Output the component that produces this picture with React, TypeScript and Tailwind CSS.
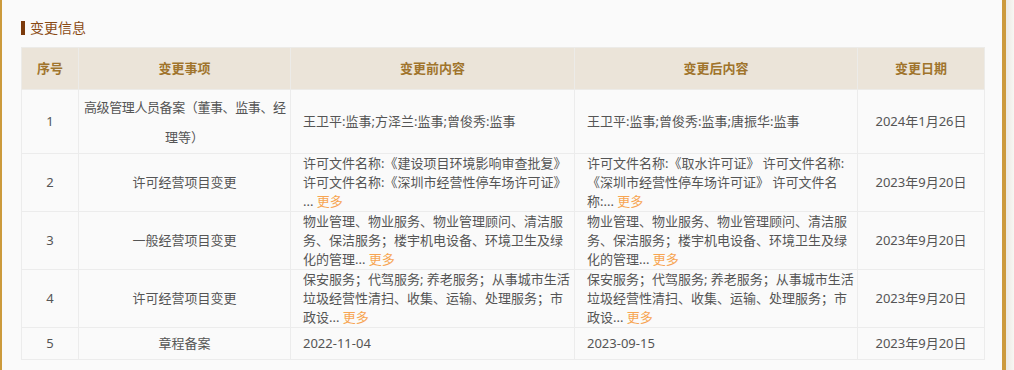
import React from "react";

const More = () => <span className="text-[#f7a552]"> 更多</span>;

type Row = {
  no: string;
  item: React.ReactNode;
  before: React.ReactNode[];
  after: React.ReactNode[];
  date: string;
  h: string;
};

const rows: Row[] = [
  {
    no: "1",
    item: (
      <div className="leading-[30px]">
        <div className="whitespace-nowrap tracking-[-0.4px]">高级管理人员备案（董事、监事、经</div>
        <div className="whitespace-nowrap">理等）</div>
      </div>
    ),
    before: ["王卫平:监事;方泽兰:监事;曾俊秀:监事"],
    after: ["王卫平:监事;曾俊秀:监事;唐振华:监事"],
    date: "2024年1月26日",
    h: "h-[64px]",
  },
  {
    no: "2",
    item: "许可经营项目变更",
    before: [
      "许可文件名称:《建设项目环境影响审查批复》",
      "许可文件名称:《深圳市经营性停车场许可证》",
      <>
        ...<More />
      </>,
    ],
    after: [
      "许可文件名称:《取水许可证》 许可文件名称:",
      "《深圳市经营性停车场许可证》 许可文件名",
      <>
        称:...<More />
      </>,
    ],
    date: "2023年9月20日",
    h: "h-[57px]",
  },
  {
    no: "3",
    item: "一般经营项目变更",
    before: [
      "物业管理、物业服务、物业管理顾问、清洁服",
      "务、保洁服务；楼宇机电设备、环境卫生及绿",
      <>
        化的管理...<More />
      </>,
    ],
    after: [
      "物业管理、物业服务、物业管理顾问、清洁服",
      "务、保洁服务；楼宇机电设备、环境卫生及绿",
      <>
        化的管理...<More />
      </>,
    ],
    date: "2023年9月20日",
    h: "h-[58px]",
  },
  {
    no: "4",
    item: "许可经营项目变更",
    before: [
      "保安服务；代驾服务; 养老服务；从事城市生活",
      "垃圾经营性清扫、收集、运输、处理服务；市",
      <>
        政设...<More />
      </>,
    ],
    after: [
      "保安服务；代驾服务; 养老服务；从事城市生活",
      "垃圾经营性清扫、收集、运输、处理服务；市",
      <>
        政设...<More />
      </>,
    ],
    date: "2023年9月20日",
    h: "h-[58px]",
  },
  {
    no: "5",
    item: "章程备案",
    before: ["2022-11-04"],
    after: ["2023-09-15"],
    date: "2023年9月20日",
    h: "h-[32px]",
  },
];

const Lines = ({ lines }: { lines: React.ReactNode[] }) => (
  <div className="leading-[19px]">
    {lines.map((l, i) => (
      <div key={i} className="whitespace-nowrap">
        {l}
      </div>
    ))}
  </div>
);

export default function App() {
  return (
    <div
      className="flex h-[370px] w-[1014px] overflow-hidden"
      style={{ fontFamily: '"Noto Sans", "Noto Sans CJK SC", sans-serif' }}
    >
      <div className="w-[2px] shrink-0 bg-[#cc9a3c]" />
      <div className="w-[1000px] shrink-0 bg-[#fafafa] pl-[19px] pt-[19px]">
        <div className="flex h-[17px] items-center">
          <div className="h-[14px] w-[4px] bg-[#7b3a0c]" />
          <span className="ml-[5px] text-[14px] leading-[17px] text-[#8a4a14]">变更信息</span>
        </div>
        <table className="mt-[11px] w-[963px] table-fixed border-collapse text-[13px] text-[#555555]">
          <colgroup>
            <col className="w-[57px]" />
            <col className="w-[212px]" />
            <col className="w-[284px]" />
            <col className="w-[283px]" />
            <col className="w-[127px]" />
          </colgroup>
          <thead>
            <tr className="h-[42px] bg-[#ebe4d9] text-[13px] font-bold text-[#a0742c]">
              <th className="border border-[#ecebe8] p-0 font-bold">序号</th>
              <th className="border border-[#ecebe8] p-0 font-bold">变更事项</th>
              <th className="border border-[#ecebe8] p-0 font-bold">变更前内容</th>
              <th className="border border-[#ecebe8] p-0 font-bold">变更后内容</th>
              <th className="border border-[#ecebe8] p-0 font-bold">变更日期</th>
            </tr>
          </thead>
          <tbody>
            {rows.map((r) => (
              <tr key={r.no} className={`${r.h} bg-[#fafafa]`}>
                <td className="border border-[#ececec] p-0 text-center">{r.no}</td>
                <td className="border border-[#ececec] px-[5px] py-0 text-center">{r.item}</td>
                <td className="border border-[#ececec] px-[12px] py-0 text-left">
                  <Lines lines={r.before} />
                </td>
                <td className="border border-[#ececec] px-[12px] py-0 text-left">
                  <Lines lines={r.after} />
                </td>
                <td className="border border-[#ececec] p-0 text-center">{r.date}</td>
              </tr>
            ))}
          </tbody>
        </table>
      </div>
      <div className="w-[4px] shrink-0 bg-[#cc9a3c]" />
      <div className="flex-1 bg-gradient-to-r from-[#ecE9e2] to-[#f7f6f3]" />
    </div>
  );
}
